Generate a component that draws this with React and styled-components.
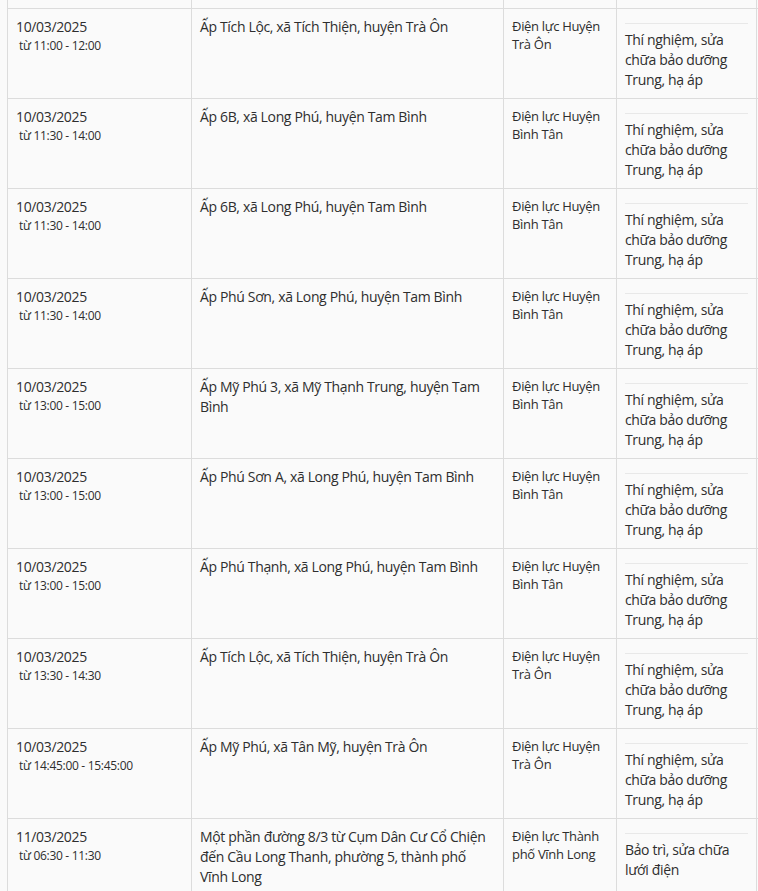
import React from "react";
import styled, { createGlobalStyle } from "styled-components";

const GlobalStyle = createGlobalStyle`
  html, body {
    margin: 0;
    padding: 0;
    background: #fafafa;
  }
  body {
    font-family: "Segoe UI", "Open Sans", "Noto Sans", sans-serif;
    font-size: 14px;
    letter-spacing: -0.35px;
    color: #2e2e2e;
  }
`;

const outages = [
  { date: "10/03/2025", time: "từ 11:00 - 12:00", place: "Ấp Tích Lộc, xã Tích Thiện, huyện Trà Ôn", unit: "Điện lực Huyện Trà Ôn", reason: "Thí nghiệm, sửa chữa bảo dưỡng Trung, hạ áp" },
  { date: "10/03/2025", time: "từ 11:30 - 14:00", place: "Ấp 6B, xã Long Phú, huyện Tam Bình", unit: "Điện lực Huyện Bình Tân", reason: "Thí nghiệm, sửa chữa bảo dưỡng Trung, hạ áp" },
  { date: "10/03/2025", time: "từ 11:30 - 14:00", place: "Ấp 6B, xã Long Phú, huyện Tam Bình", unit: "Điện lực Huyện Bình Tân", reason: "Thí nghiệm, sửa chữa bảo dưỡng Trung, hạ áp" },
  { date: "10/03/2025", time: "từ 11:30 - 14:00", place: "Ấp Phú Sơn, xã Long Phú, huyện Tam Bình", unit: "Điện lực Huyện Bình Tân", reason: "Thí nghiệm, sửa chữa bảo dưỡng Trung, hạ áp" },
  { date: "10/03/2025", time: "từ 13:00 - 15:00", place: "Ấp Mỹ Phú 3, xã Mỹ Thạnh Trung, huyện Tam Bình", unit: "Điện lực Huyện Bình Tân", reason: "Thí nghiệm, sửa chữa bảo dưỡng Trung, hạ áp" },
  { date: "10/03/2025", time: "từ 13:00 - 15:00", place: "Ấp Phú Sơn A, xã Long Phú, huyện Tam Bình", unit: "Điện lực Huyện Bình Tân", reason: "Thí nghiệm, sửa chữa bảo dưỡng Trung, hạ áp" },
  { date: "10/03/2025", time: "từ 13:00 - 15:00", place: "Ấp Phú Thạnh, xã Long Phú, huyện Tam Bình", unit: "Điện lực Huyện Bình Tân", reason: "Thí nghiệm, sửa chữa bảo dưỡng Trung, hạ áp" },
  { date: "10/03/2025", time: "từ 13:30 - 14:30", place: "Ấp Tích Lộc, xã Tích Thiện, huyện Trà Ôn", unit: "Điện lực Huyện Trà Ôn", reason: "Thí nghiệm, sửa chữa bảo dưỡng Trung, hạ áp" },
  { date: "10/03/2025", time: "từ 14:45:00 - 15:45:00", place: "Ấp Mỹ Phú, xã Tân Mỹ, huyện Trà Ôn", unit: "Điện lực Huyện Trà Ôn", reason: "Thí nghiệm, sửa chữa bảo dưỡng Trung, hạ áp" },
  { date: "11/03/2025", time: "từ 06:30 - 11:30", place: "Một phần đường 8/3 từ Cụm Dân Cư Cổ Chiện đến Cầu Long Thanh, phường 5, thành phố Vĩnh Long", unit: "Điện lực Thành phố Vĩnh Long", reason: "Bảo trì, sửa chữa lưới điện" },
];

const Table = styled.div`
  width: 750px;
  margin-left: 7px;
  border-left: 1px solid #dcdcdc;
`;

const Row = styled.div`
  display: grid;
  grid-template-columns: 184px 312px 113px 140px;
  height: ${(p) => (p.$stub ? "8px" : "90px")};
  border-top: ${(p) => (p.$stub ? "none" : "1px solid #dcdcdc")};
  box-sizing: border-box;
`;

const Cell = styled.div`
  border-right: 1px solid #dcdcdc;
  padding: ${(p) => (p.$stub ? "0" : "8px")};
  line-height: 20px;
  overflow: hidden;
  min-width: 0;
`;

const UnitCell = styled(Cell)`
  font-size: 13px;
  line-height: 18px;
  letter-spacing: -0.3px;
`;

const Time = styled.span`
  display: block;
  font-size: 12px;
  line-height: 18px;
  letter-spacing: -0.3px;
  padding-left: 3px;
`;

const Rule = styled.div`
  border-top: 1px solid #e8e8e8;
  margin: 6px 0;
`;

export default function App() {
  return (
    <>
      <GlobalStyle />
      <Table>
        <Row $stub>
          <Cell $stub />
          <Cell $stub />
          <Cell $stub />
          <Cell $stub />
        </Row>
        {outages.map((o, i) => (
          <Row key={i}>
            <Cell>
              {o.date}
              <Time>{o.time}</Time>
            </Cell>
            <Cell>{o.place}</Cell>
            <UnitCell>{o.unit}</UnitCell>
            <Cell>
              <Rule />
              {o.reason}
            </Cell>
          </Row>
        ))}
      </Table>
    </>
  );
}
